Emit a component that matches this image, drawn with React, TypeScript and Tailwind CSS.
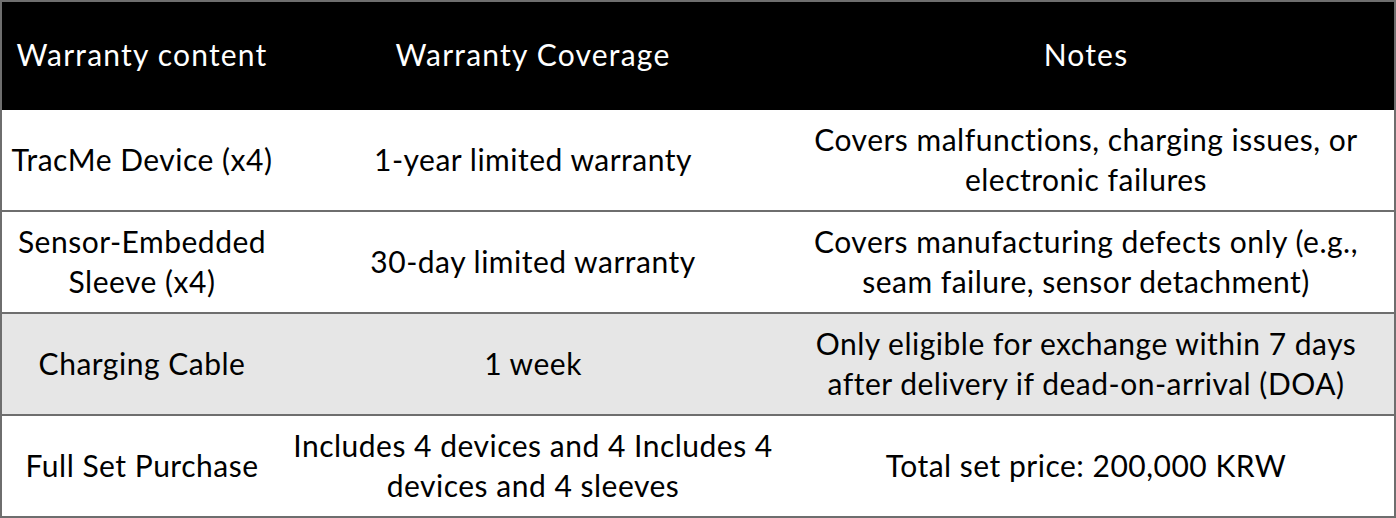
const rows = [
  {
    item: ['TracMe Device (x4)'],
    coverage: ['1-year limited warranty'],
    notes: ['Covers malfunctions, charging issues, or', 'electronic failures'],
    shaded: false,
  },
  {
    item: ['Sensor-Embedded', 'Sleeve (x4)'],
    coverage: ['30-day limited warranty'],
    notes: ['Covers manufacturing defects only (e.g.,', 'seam failure, sensor detachment)'],
    shaded: false,
  },
  {
    item: ['Charging Cable'],
    coverage: ['1 week'],
    notes: ['Only eligible for exchange within 7 days', 'after delivery if dead-on-arrival (DOA)'],
    shaded: true,
  },
  {
    item: ['Full Set Purchase'],
    coverage: ['Includes 4 devices and 4 Includes 4', 'devices and 4 sleeves'],
    notes: ['Total set price: 200,000 KRW'],
    shaded: false,
  },
];

function Cell({ lines, className = '' }: { lines: string[]; className?: string }) {
  return (
    <div className={`flex flex-col items-center justify-center text-center ${className}`}>
      {lines.map((line) => (
        <span key={line} className="whitespace-nowrap">
          {line}
        </span>
      ))}
    </div>
  );
}

export default function App() {
  return (
    <div className="h-[518px] w-[1396px] bg-white">
      <div
        className="flex h-full flex-col border-2 border-[#6e6e6e] text-[30px] leading-[40px] tracking-[0.5px] text-black"
        style={{ fontFamily: 'Lato, "Open Sans", sans-serif' }}
      >
        <div className="grid h-[108px] shrink-0 grid-cols-[280px_502px_1fr] bg-black pb-[4px] text-white tracking-[1.2px]">
          <Cell lines={['Warranty content']} />
          <Cell lines={['Warranty Coverage']} />
          <Cell lines={['Notes']} className="pr-1.5" />
        </div>
        {rows.map((row, i) => (
          <div
            key={row.item[0]}
            className={`grid grid-cols-[280px_502px_1fr] pb-[2px] ${
              row.shaded ? 'bg-[#e6e6e6]' : 'bg-white'
            } ${i < rows.length - 1 ? 'h-[102px] shrink-0 border-b-2 border-[#6e6e6e]' : 'flex-1'}`}
          >
            <Cell lines={row.item} />
            <Cell lines={row.coverage} />
            <Cell lines={row.notes} className="pr-1.5" />
          </div>
        ))}
      </div>
    </div>
  );
}
